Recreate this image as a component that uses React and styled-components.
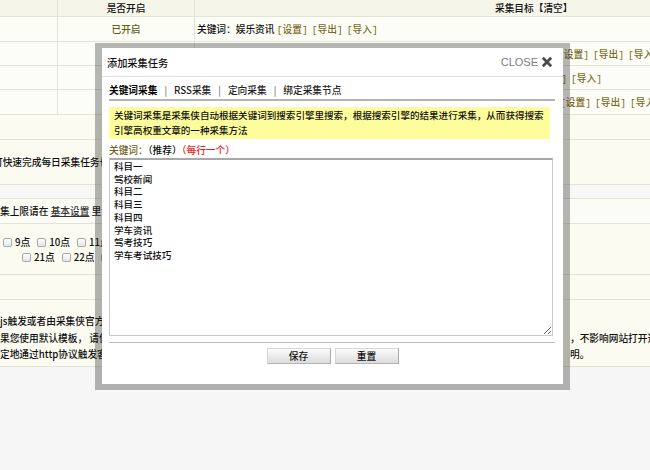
import React from 'react'
import styled, { createGlobalStyle } from 'styled-components'

const GlobalStyle = createGlobalStyle`
* { box-sizing: border-box; }
body {
  margin: 0;
  background: #f6f6f6;
  font-family: "Noto Sans CJK SC", "Noto Sans", sans-serif;
  font-size: 9.7px;
  font-weight: 500;
  color: #111;
}
`

const Page = styled.div`
position: relative;
width: 650px;
height: 470px;
overflow: hidden;
background: #f6f6f6;
`

const Table = styled.div`
display: flex;
flex-direction: column;
`

const Row = styled.div`
display: flex;
flex-shrink: 0;
height: ${p => p.$h}px;
background: ${p => p.$bg || '#fbfbf1'};
border-bottom: 1px solid #e4e4d4;
`

const Cell = styled.div`
flex: ${p => (p.$w ? `0 0 ${p.$w}px` : '1 1 0')};
display: flex;
align-items: center;
justify-content: ${p => (p.$center ? 'center' : 'flex-start')};
padding-left: ${p => p.$pl || 0}px;
border-right: ${p => (p.$divider ? '1px solid #e4e4d4' : 'none')};
white-space: nowrap;
overflow: hidden;
`

const Block = styled.div`
display: flex;
flex-direction: column;
justify-content: ${p => p.$justify || 'center'};
padding-top: ${p => p.$pt || 0}px;
width: 100%;
line-height: ${p => p.$lh || 15}px;
white-space: nowrap;
overflow: hidden;
`

const Line = styled.div`
display: flex;
text-indent: ${p => p.$indent || 0}px;
`

const Clip = styled.span`
flex: 0 0 ${p => p.$w}px;
overflow: hidden;
white-space: nowrap;
`

const Enabled = styled.span`
color: #62621a;
`

const ActionLink = styled.span`
font-family: "Liberation Mono", "Noto Sans CJK SC", monospace;
font-size: 9.7px;
color: #7a6a26;
margin-right: 4px;
`

const Under = styled.span`
text-decoration: underline;
color: #333;
`

const Hours = styled.div`
display: flex;
align-items: center;
padding-left: ${p => p.$pl}px;
height: 15px;
`

const Hour = styled.label`
display: flex;
align-items: center;
margin-right: ${p => p.$mr || 7}px;
`

const Box = styled.span`
width: 9px;
height: 9px;
margin-right: 3px;
border: 1px solid #a9a9a9;
border-radius: 2px;
background: linear-gradient(#ffffff, #e6e6e6);
`

/* dialog */

const Dialog = styled.div`
position: absolute;
left: 95px;
top: 43px;
width: 475px;
height: 347px;
border-style: solid;
border-color: rgba(40, 40, 40, 0.34);
border-width: 5px 7px 6px 7px;
background: #fff;
background-clip: padding-box;
display: flex;
flex-direction: column;
`

const TitleBar = styled.div`
display: flex;
justify-content: space-between;
align-items: center;
height: 29px;
padding: 0 10px 0 5px;
border-bottom: 1px solid #e2e2e2;
`

const Title = styled.div`
font-size: 10.2px;
color: #111;
`

const Close = styled.div`
display: flex;
align-items: center;
gap: 3px;
font-family: "Liberation Sans", Arial, sans-serif;
font-size: 11px;
font-weight: 400;
color: #808080;
`

const Tabs = styled.div`
display: flex;
align-items: center;
height: 24px;
margin: 0 8px 0 7px;
padding-top: 3px;
border-bottom: 2px solid #b4b4b4;
`

const Tab = styled.span`
font-weight: ${p => (p.$active ? 700 : 500)};
color: ${p => (p.$active ? '#000' : '#222')};
`

const Sep = styled.span`
margin: 0 7px;
font-weight: 400;
color: #555;
`

const Notice = styled.div`
margin: 6px 13px 0 7px;
padding: 1px 5px;
font-size: 9.55px;
line-height: 15px;
background: #fdfd9b;
color: #111;
white-space: nowrap;
`

const FieldLabel = styled.div`
margin: 4px 0 0 7px;
line-height: 15px;
color: #6f5f20;
`

const Plain = styled.span`
color: #111;
`

const Red = styled.span`
color: #e2261f;
`

const Keywords = styled.textarea`
display: block;
width: 444px;
height: 178px;
margin: 0 0 0 7px;
padding: 0 4px;
border: 1px solid #c8c8c8;
border-top: 2px solid #a8a8a8;
font-family: "Noto Sans CJK SC", sans-serif;
font-size: 9.55px;
font-weight: 500;
line-height: 12.7px;
color: #111;
outline: none;
`

const Divider = styled.div`
margin: 6px 8px 0 7px;
border-top: 1px solid #bdbdbd;
`

const Buttons = styled.div`
display: flex;
justify-content: center;
gap: 4px;
margin-top: 5px;
`

const Button = styled.button`
width: 64px;
height: 16px;
padding: 0;
font-family: "Noto Sans CJK SC", sans-serif;
font-size: 9.7px;
font-weight: 500;
line-height: 14px;
color: #111;
border: 1px solid #d6d6d6;
border-right-color: #a9a9a9;
border-bottom-color: #b5b5b5;
background: linear-gradient(#fbfbfb, #dcdcdc);
`

const CloseIcon = () => (
  <svg width="12" height="12" viewBox="0 0 12 12">
    <path d="M1.8 1.8 L10.2 10.2 M10.2 1.8 L1.8 10.2" stroke="#4a4a4a" strokeWidth="2.7" />
  </svg>
)

const Links = () => (
  <>
    <ActionLink>[设置]</ActionLink>
    <ActionLink>[导出]</ActionLink>
    <ActionLink>[导入]</ActionLink>
  </>
)

const keywordText = '科目一\n驾校新闻\n科目二\n科目三\n科目四\n学车资讯\n驾考技巧\n学车考试技巧'

export default function App() {
  return (
    <Page>
      <GlobalStyle />
      <Table>
        <Row $h={17} $bg="#f5f5ea">
          <Cell $w={58} $divider />
          <Cell $w={137} $divider $center>是否开启</Cell>
          <Cell $pl={300}>采集目标 <Plain>【清空】</Plain></Cell>
        </Row>
        <Row $h={25} $bg="#fdfdf7">
          <Cell $w={58} $divider />
          <Cell $w={137} $divider $center><Enabled>已开启</Enabled></Cell>
          <Cell $pl={2}>关键词：娱乐资讯&nbsp;<Links /></Cell>
        </Row>
        <Row $h={24} $bg="#fdfdf7">
          <Cell $w={58} $divider />
          <Cell $w={137} $divider $center><Enabled>已开启</Enabled></Cell>
          <Cell $pl={2}>
            <Clip $w={361}>关键词：科目一 驾校新闻 科目二 科目三 科目四 学车资讯 驾考技巧 学车考试技巧</Clip>
            <Links />
          </Cell>
        </Row>
        <Row $h={24} $bg="#fdfdf7">
          <Cell $w={58} $divider />
          <Cell $w={137} $divider $center><Enabled>已开启</Enabled></Cell>
          <Cell $pl={2}>
            <Clip $w={304}>关键词：驾校新闻 学车资讯 驾考技巧 学车考试技巧</Clip>
            <Links />
          </Cell>
        </Row>
        <Row $h={25} $bg="#fdfdf7">
          <Cell $w={58} $divider />
          <Cell $w={137} $divider $center><Enabled>已开启</Enabled></Cell>
          <Cell $pl={2}>
            <Clip $w={363}>关键词：科目一 科目二 科目三 科目四 驾考技巧 学车考试技巧</Clip>
            <Links />
          </Cell>
        </Row>
        <Row $h={25} />
        <Row $h={45}>
          <Block><Line $indent={-7}>可快速完成每日采集任务也可以手动执行</Line></Block>
        </Row>
        <Row $h={14} $bg="#f8f8f6" />
        <Row $h={25} $bg="#fcfcf6">
          <Block><Line>集上限请在&nbsp;<Under>基本设置</Under>&nbsp;里设置</Line></Block>
        </Row>
        <Row $h={51}>
          <Block $justify="flex-start" $pt={11}>
            <Hours $pl={3}>
              <Hour><Box />9点</Hour>
              <Hour><Box />10点</Hour>
              <Hour><Box />11点</Hour>
            </Hours>
            <Hours $pl={22}>
              <Hour><Box />21点</Hour>
              <Hour><Box />22点</Hour>
              <Hour><Box />23点</Hour>
            </Hours>
          </Block>
        </Row>
        <Row $h={25} />
        <Row $h={67}>
          <Block $justify="flex-start" $pt={13} $lh={16.5}>
            <Line><Clip $w={570}>js触发或者由采集侠官方服务器定时触发采集任务</Clip></Line>
            <Line><Clip $w={570}>果您使用默认模板， 请使用js方式触发采集任务</Clip><span>，不影响网站打开速度</span></Line>
            <Line><Clip $w={570}>定地通过http协议触发客户端采集任务，详见说</Clip><span>明。</span></Line>
          </Block>
        </Row>
      </Table>

      <Dialog>
        <TitleBar>
          <Title>添加采集任务</Title>
          <Close>CLOSE <CloseIcon /></Close>
        </TitleBar>
        <Tabs>
          <Tab $active>关键词采集</Tab>
          <Sep>|</Sep>
          <Tab>RSS采集</Tab>
          <Sep>|</Sep>
          <Tab>定向采集</Tab>
          <Sep>|</Sep>
          <Tab>绑定采集节点</Tab>
        </Tabs>
        <Notice>
          关键词采集是采集侠自动根据关键词到搜索引擎里搜索，根据搜索引擎的结果进行采集，从而获得搜索<br />
          引擎高权重文章的一种采集方法
        </Notice>
        <FieldLabel>关键词：<Plain>（推荐）</Plain><Red>（每行一个）</Red></FieldLabel>
        <Keywords defaultValue={keywordText} />
        <Divider />
        <Buttons>
          <Button>保存</Button>
          <Button>重置</Button>
        </Buttons>
      </Dialog>
    </Page>
  )
}
